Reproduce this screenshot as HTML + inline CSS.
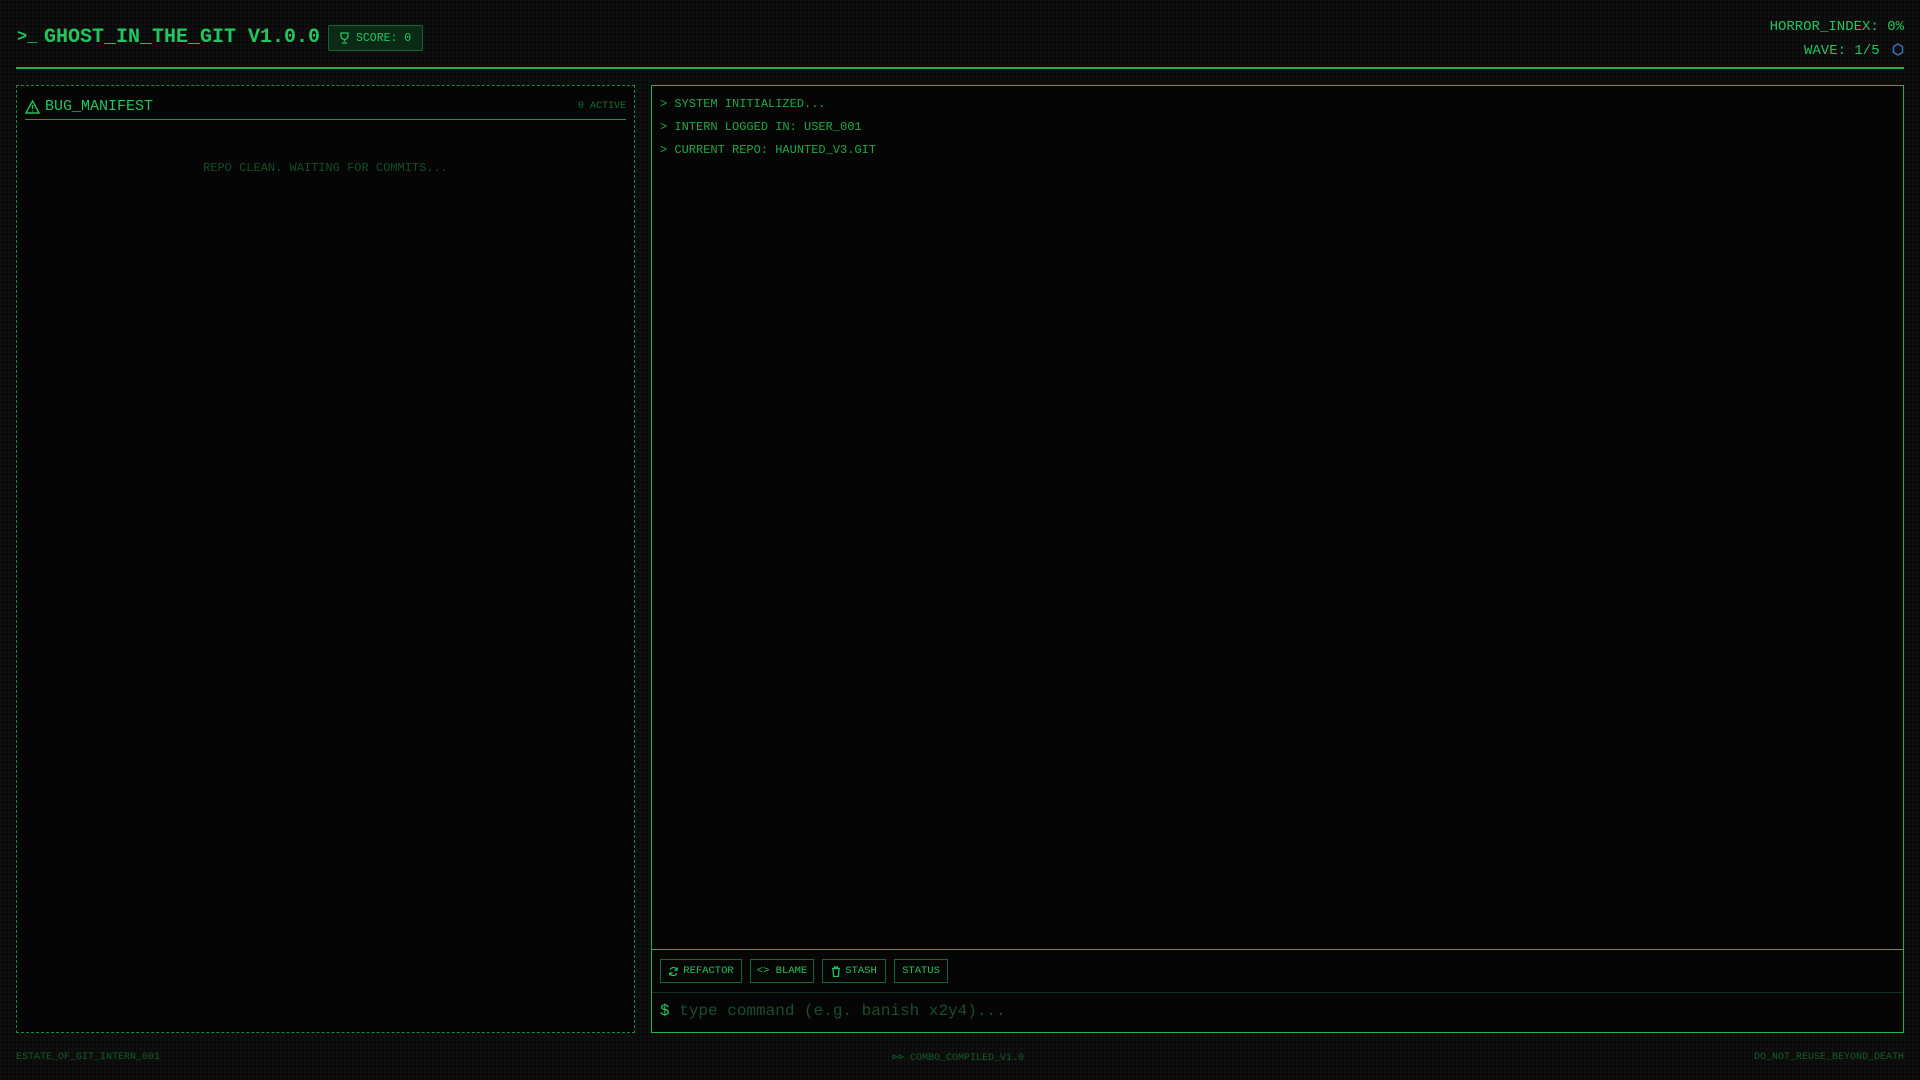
<!DOCTYPE html>
<html><head><meta charset="utf-8"><style>
*{margin:0;padding:0;box-sizing:border-box}
body{width:1920px;height:1080px;overflow:hidden;background:#0a0a0a;
background-image:linear-gradient(rgba(255,255,255,0.02) 1px,transparent 1px),linear-gradient(90deg,rgba(255,255,255,0.02) 1px,transparent 1px);background-size:4px 4px;
font-family:"Liberation Mono",monospace;color:#22c55e;position:relative}
.abs{position:absolute}
.title{left:44px;top:25px;font-size:20px;font-weight:bold;white-space:nowrap;line-height:26px}
.prompt{left:17px;top:25px;font-size:17px;font-weight:bold;line-height:26px}
.score{left:328px;top:25px;width:95px;height:26px;border:1px solid #166534;background:#0b2a15;border-radius:2px;font-size:11.5px;display:flex;align-items:center;padding-left:10px;gap:6px;color:#22c55e}
.hr{left:16px;top:67px;width:1888px;height:2px;background:#1fb34f}
.rt{right:16px;font-size:14px;text-align:right;white-space:nowrap}
.left{left:16px;top:85px;width:619px;height:948px;border:1px dashed #1a8a3e;background:#050505}
.right{left:651px;top:85px;width:1253px;height:948px;border:1px solid #1fb34f;background:#050505}
.lh{position:absolute;left:8px;right:8px;top:8px;height:26px;border-bottom:1px solid #1a9a42;display:flex;align-items:center;font-size:15px}
.term{position:absolute;left:8px;top:7px;font-size:12px;color:#1fa845;line-height:23px;white-space:nowrap}
.btns{position:absolute;left:0;right:0;top:863px;height:44px;border-top:1px solid #1fb34f;border-bottom:1px solid #12331c}
.btn{position:absolute;top:9px;height:24px;border:1px solid #166534;font-size:10.5px;display:flex;align-items:center;justify-content:center;gap:4px;color:#22c55e}
.inp{position:absolute;left:8px;top:916px;font-size:16px;white-space:nowrap;color:#1a4d2a}
.ft{top:1052px;font-size:10px;color:#145c2c;white-space:nowrap}
</style></head><body>
<div class="abs prompt">&gt;_</div>
<div class="abs title">GHOST_IN_THE_GIT V1.0.0</div>
<div class="abs score"><svg width="11" height="12" viewBox="0 0 11 12" fill="none" stroke="#22c55e" stroke-width="1.3"><path d="M2 1h7v3a3.5 3.5 0 0 1-7 0z"/><path d="M5.5 7.5v2M3 11h5"/></svg>SCORE: 0</div>
<div class="abs rt" style="top:19px">HORROR_INDEX: 0%</div>
<div class="abs rt" style="top:43px">WAVE: 1/5 <svg width="12" height="13" viewBox="0 0 12 13" style="vertical-align:-2px;margin-left:4px"><path d="M6 1l4.5 2.6v5.8L6 12 1.5 9.4V3.6z" fill="none" stroke="#3b6fb6" stroke-width="1.5"/></svg></div>
<div class="abs hr"></div>
<div class="abs left">
 <div class="lh"><svg width="15" height="14" viewBox="0 0 15 14" fill="none" stroke="#22c55e" stroke-width="1.4" style="margin-right:5px"><path d="M7.5 1L14 13H1z"/><path d="M7.5 5v4M7.5 10.5v1"/></svg>BUG_MANIFEST<span style="margin-left:auto;font-size:10px;color:#15703a">0 ACTIVE</span></div>
 <div style="position:absolute;left:0;right:0;top:75px;text-align:center;font-size:12px;color:#154d27">REPO CLEAN. WAITING FOR COMMITS...</div>
</div>
<div class="abs right">
 <div class="term">&gt; SYSTEM INITIALIZED...<br>&gt; INTERN LOGGED IN: USER_001<br>&gt; CURRENT REPO: HAUNTED_V3.GIT</div>
 <div class="btns">
  <div class="btn" style="left:8px;width:82px"><svg width="11" height="11" viewBox="0 0 12 12" fill="none" stroke="#22c55e" stroke-width="1.3"><path d="M10 4.5A4.2 4.2 0 0 0 2.3 4M2 7.5a4.2 4.2 0 0 0 7.7.5"/><path d="M10 1.5v3H7M2 10.5v-3h3"/></svg>REFACTOR</div>
  <div class="btn" style="left:98px;width:64px">&lt;&gt; BLAME</div>
  <div class="btn" style="left:170px;width:64px"><svg width="10" height="11" viewBox="0 0 10 11" fill="none" stroke="#22c55e" stroke-width="1.3"><path d="M1 2.5h8M3.5 2.5V1h3v1.5M2 2.5l.6 8h4.8l.6-8"/></svg>STASH</div>
  <div class="btn" style="left:242px;width:54px">STATUS</div>
 </div>
 <div class="inp"><span style="color:#22c55e">$</span> type command (e.g. banish x2y4)...</div>
</div>
<div class="abs ft" style="left:16px">ESTATE_OF_GIT_INTERN_001</div>
<div class="abs ft" style="left:892px">⊳⊳ COMBO_COMPILED_V1.0</div>
<div class="abs ft" style="right:16px">DO_NOT_REUSE_BEYOND_DEATH</div>
</body></html>
